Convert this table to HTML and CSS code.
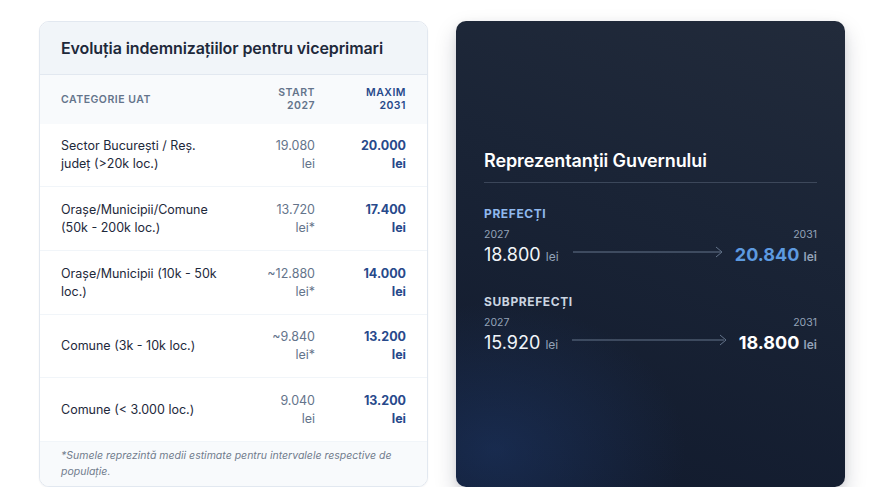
FILE: index.html
```html
<!DOCTYPE html>
<html lang="ro">
<head>
<meta charset="utf-8">
<title>Indemnizații</title>
<link rel="stylesheet" href="styles.css">
</head>
<body>
<div class="page">
  <section class="card table-card">
    <h2 class="card-title">Evoluția indemnizațiilor pentru viceprimari</h2>
    <div class="thead">
      <div class="th">Categorie UAT</div>
      <div class="th num">Start<br>2027</div>
      <div class="th num max">Maxim<br>2031</div>
    </div>
    <div class="row">
      <div class="cat">Sector București / Reș. județ (&gt;20k loc.)</div>
      <div class="start">19.080<br>lei</div>
      <div class="maxv">20.000<br>lei</div>
    </div>
    <div class="row">
      <div class="cat">Orașe/Municipii/Comune (50k - 200k loc.)</div>
      <div class="start">13.720<br>lei*</div>
      <div class="maxv">17.400<br>lei</div>
    </div>
    <div class="row">
      <div class="cat">Orașe/Municipii (10k - 50k loc.)</div>
      <div class="start">~12.880<br>lei*</div>
      <div class="maxv">14.000<br>lei</div>
    </div>
    <div class="row">
      <div class="cat">Comune (3k - 10k loc.)</div>
      <div class="start">~9.840<br>lei*</div>
      <div class="maxv">13.200<br>lei</div>
    </div>
    <div class="row">
      <div class="cat">Comune (&lt; 3.000 loc.)</div>
      <div class="start">9.040<br>lei</div>
      <div class="maxv">13.200<br>lei</div>
    </div>
    <p class="note">*Sumele reprezintă medii estimate pentru intervalele respective de populație.</p>
  </section>

  <section class="card dark-card">
    <div class="dark-inner">
      <h2 class="dark-title">Reprezentanții Guvernului</h2>
      <div class="group">
        <div class="group-label blue">Prefecți</div>
        <div class="compare">
          <div class="side">
            <div class="year">2027</div>
            <div class="value">18.800 <span class="unit">lei</span></div>
          </div>
          <svg class="arrow" viewBox="0 0 100 12" preserveAspectRatio="none" aria-hidden="true">
            <line x1="0" y1="6" x2="99" y2="6" stroke="#64748b" stroke-width="1" vector-effect="non-scaling-stroke"/>
          </svg>
          <svg class="arrow-head" viewBox="0 0 8 12" aria-hidden="true"><path d="M1 1 L7 6 L1 11" fill="none" stroke="#64748b" stroke-width="1"/></svg>
          <div class="side right">
            <div class="year">2031</div>
            <div class="value strong hl">20.840 <span class="unit">lei</span></div>
          </div>
        </div>
      </div>
      <div class="group">
        <div class="group-label light">Subprefecți</div>
        <div class="compare">
          <div class="side">
            <div class="year">2027</div>
            <div class="value">15.920 <span class="unit">lei</span></div>
          </div>
          <svg class="arrow" viewBox="0 0 100 12" preserveAspectRatio="none" aria-hidden="true">
            <line x1="0" y1="6" x2="99" y2="6" stroke="#64748b" stroke-width="1" vector-effect="non-scaling-stroke"/>
          </svg>
          <svg class="arrow-head" viewBox="0 0 8 12" aria-hidden="true"><path d="M1 1 L7 6 L1 11" fill="none" stroke="#64748b" stroke-width="1"/></svg>
          <div class="side right">
            <div class="year">2031</div>
            <div class="value strong">18.800 <span class="unit">lei</span></div>
          </div>
        </div>
      </div>
    </div>
  </section>
</div>
</body>
</html>
```

FILE: styles.css
```css
* { box-sizing: border-box; }
html, body { margin: 0; padding: 0; background: #ffffff; }
body { font-family: Inter, "Noto Sans", "Liberation Sans", sans-serif; color: #1e293b; }

.page {
  display: flex;
  gap: 28px;
  padding: 21px 0 0 39px;
}

.card {
  width: 389px;
  height: 466px;
  border-radius: 10px;
  overflow: hidden;
}

.table-card {
  border: 1px solid #e2e8f0;
  background: #ffffff;
  box-shadow: 0 1px 2px rgba(15, 23, 42, 0.05);
  display: flex;
  flex-direction: column;
}

.card-title {
  margin: 0;
  height: 53px;
  padding: 0 21px;
  display: flex;
  align-items: center;
  background: #f1f5f9;
  border-bottom: 1px solid #e2e8f0;
  font-size: 16px;
  font-weight: 600;
  color: #1e293b;
  letter-spacing: -0.1px;
}

.thead, .row {
  display: grid;
  grid-template-columns: 165px 1fr 91px;
  padding: 0 21px;
  align-items: center;
}

.thead {
  height: 49px;
  background: #f8fafc;
}

.th {
  font-size: 10.5px;
  font-weight: 600;
  text-transform: uppercase;
  letter-spacing: 0.5px;
  line-height: 13px;
  color: #64748b;
}
.th.num { text-align: right; }
.th.max { color: #27498b; }

.row {
  height: 64px;
  padding-top: 1px;
  border-bottom: 1px solid #f1f5f9;
  font-size: 12.5px;
  line-height: 18px;
}

.cat { color: #1e293b; }
.start { text-align: right; color: #64748b; }
.maxv { text-align: right; color: #27498b; font-weight: 700; }

.note {
  margin: 0;
  flex: 1;
  background: #f8fafc;
  padding: 6px 21px;
  font-size: 10.5px;
  line-height: 16px;
  font-style: italic;
  color: #717c8d;
}

.dark-card {
  position: relative;
  background:
    radial-gradient(ellipse 70% 45% at 10% 92%, rgba(30, 58, 110, 0.5), rgba(30, 58, 110, 0) 70%),
    linear-gradient(200deg, #222b3b 0%, #1a2436 40%, #111a2d 100%);
  box-shadow: 0 10px 22px rgba(15, 23, 42, 0.18), 0 3px 8px rgba(15, 23, 42, 0.08);
  display: flex;
  flex-direction: column;
  justify-content: center;
  padding: 0 28px;
}

.dark-title {
  margin: 0;
  font-size: 18px;
  font-weight: 600;
  color: #ffffff;
  padding-bottom: 11px;
  border-bottom: 1px solid rgba(148, 163, 184, 0.28);
  margin-bottom: 23px;
  letter-spacing: -0.1px;
}

.group + .group { margin-top: 24px; }

.group-label {
  font-size: 12px;
  font-weight: 700;
  text-transform: uppercase;
  letter-spacing: 0.6px;
  line-height: 16px;
  margin-bottom: 6px;
}
.group-label.blue { color: #8fb8ee; }
.group-label.light { color: #cbd5e1; }

.compare {
  display: flex;
  align-items: center;
}

.side { flex: none; }
.side.right { text-align: right; }

.year {
  font-size: 10.5px;
  line-height: 14px;
  color: #94a3b8;
}

.value {
  font-size: 18px;
  line-height: 26px;
  color: #f1f5f9;
  font-weight: 400;
}
.value.strong { font-weight: 700; color: #ffffff; }
.value.hl { color: #5d9ae0; }
.unit { font-size: 12px; font-weight: 400; color: #94a3b8; }
.value.strong .unit { font-weight: 600; }

.arrow {
  flex: 1;
  height: 12px;
  margin-left: 14px;
  margin-top: 6px;
}
.arrow-head {
  width: 8px;
  height: 12px;
  margin-left: -7px;
  margin-right: 12px;
  margin-top: 6px;
  flex: none;
}
```
